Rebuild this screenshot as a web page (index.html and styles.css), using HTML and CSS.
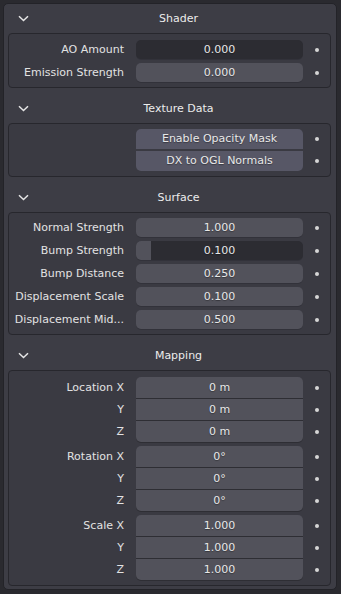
FILE: index.html
```html
<!DOCTYPE html>
<html lang="en">
<head>
    <meta charset="UTF-8">
    <meta name="viewport" content="width=device-width, initial-scale=1.0">
    <title>Material Properties</title>
    <link rel="stylesheet" href="styles.css">
</head>
<body>

    <div class="panel">

        <!-- Shader -->
        <div class="header">
            <span class="chev"><svg width="11" height="7" viewBox="0 0 11 7"><path d="M1 1.2 L5.5 5.5 L10 1.2" fill="none" stroke="#e6e6e6" stroke-width="1.5"/></svg></span>
            <span class="title">Shader</span>
        </div>
        <div class="box">
            <div class="prop">
                <span class="label">AO Amount</span>
                <div class="field slider"><span class="fill" style="width:0%"></span><span class="value">0.000</span></div>
                <span class="dot"></span>
            </div>
            <div class="prop">
                <span class="label">Emission Strength</span>
                <div class="field"><span class="value">0.000</span></div>
                <span class="dot"></span>
            </div>
        </div>

        <!-- Texture Data -->
        <div class="header">
            <span class="chev"><svg width="11" height="7" viewBox="0 0 11 7"><path d="M1 1.2 L5.5 5.5 L10 1.2" fill="none" stroke="#e6e6e6" stroke-width="1.5"/></svg></span>
            <span class="title">Texture Data</span>
        </div>
        <div class="box tight">
            <div class="prop toggle">
                <span class="label"></span>
                <div class="button first">Enable Opacity Mask</div>
                <span class="dot"></span>
            </div>
            <div class="prop toggle">
                <span class="label"></span>
                <div class="button last">DX to OGL Normals</div>
                <span class="dot"></span>
            </div>
        </div>

        <!-- Surface -->
        <div class="header">
            <span class="chev"><svg width="11" height="7" viewBox="0 0 11 7"><path d="M1 1.2 L5.5 5.5 L10 1.2" fill="none" stroke="#e6e6e6" stroke-width="1.5"/></svg></span>
            <span class="title">Surface</span>
        </div>
        <div class="box tight">
            <div class="prop">
                <span class="label">Normal Strength</span>
                <div class="field"><span class="value">1.000</span></div>
                <span class="dot"></span>
            </div>
            <div class="prop">
                <span class="label">Bump Strength</span>
                <div class="field slider"><span class="fill" style="width:9%"></span><span class="value">0.100</span></div>
                <span class="dot"></span>
            </div>
            <div class="prop">
                <span class="label">Bump Distance</span>
                <div class="field"><span class="value">0.250</span></div>
                <span class="dot"></span>
            </div>
            <div class="prop">
                <span class="label">Displacement Scale</span>
                <div class="field"><span class="value">0.100</span></div>
                <span class="dot"></span>
            </div>
            <div class="prop">
                <span class="label">Displacement Mid...</span>
                <div class="field"><span class="value">0.500</span></div>
                <span class="dot"></span>
            </div>
        </div>

        <!-- Mapping -->
        <div class="header">
            <span class="chev"><svg width="11" height="7" viewBox="0 0 11 7"><path d="M1 1.2 L5.5 5.5 L10 1.2" fill="none" stroke="#e6e6e6" stroke-width="1.5"/></svg></span>
            <span class="title">Mapping</span>
        </div>
        <div class="box">
            <div class="group">
                <div class="prop joined">
                    <span class="label">Location X</span>
                    <div class="field first"><span class="value">0 m</span></div>
                    <span class="dot"></span>
                </div>
                <div class="prop joined">
                    <span class="label">Y</span>
                    <div class="field mid"><span class="value">0 m</span></div>
                    <span class="dot"></span>
                </div>
                <div class="prop joined">
                    <span class="label">Z</span>
                    <div class="field last"><span class="value">0 m</span></div>
                    <span class="dot"></span>
                </div>
            </div>
            <div class="group">
                <div class="prop joined">
                    <span class="label">Rotation X</span>
                    <div class="field first"><span class="value">0°</span></div>
                    <span class="dot"></span>
                </div>
                <div class="prop joined">
                    <span class="label">Y</span>
                    <div class="field mid"><span class="value">0°</span></div>
                    <span class="dot"></span>
                </div>
                <div class="prop joined">
                    <span class="label">Z</span>
                    <div class="field last"><span class="value">0°</span></div>
                    <span class="dot"></span>
                </div>
            </div>
            <div class="group">
                <div class="prop joined">
                    <span class="label">Scale X</span>
                    <div class="field first"><span class="value">1.000</span></div>
                    <span class="dot"></span>
                </div>
                <div class="prop joined">
                    <span class="label">Y</span>
                    <div class="field mid"><span class="value">1.000</span></div>
                    <span class="dot"></span>
                </div>
                <div class="prop joined">
                    <span class="label">Z</span>
                    <div class="field last"><span class="value">1.000</span></div>
                    <span class="dot"></span>
                </div>
            </div>
        </div>

    </div>

</body>
</html>
```

FILE: styles.css
```css
/* Pannello proprietà materiale */
body {
    margin: 0;
    background-color: #2a2a2f;
    font-family: "DejaVu Sans", sans-serif;
    font-size: 11px;
    color: #e4e4e4;
}

.panel {
    margin: 3px 4px 0 3px;
    padding: 0 5px 3px 4px;
    border: 1px solid #232328;
    border-radius: 5px;
    background-color: #3d3d45;
}

.header {
    display: flex;
    align-items: center;
    height: 29px;
    padding-right: 4px;
}
.chev {
    width: 22px;
    display: flex;
    align-items: center;
}
.chev svg {
    display: block;
    margin-left: 10px;
}
.title {
    flex: 1;
    text-align: center;
    color: #ececec;
}

.box {
    border: 1px solid #27272d;
    border-radius: 4px;
    background-color: #3a3a42;
    padding: 6px 0 5px;
    margin-bottom: 6px;
    display: flex;
    flex-direction: column;
    gap: 4px;
}
.box:last-child {
    margin-bottom: 0;
}
.box.tight {
    padding-top: 5px;
}

.prop {
    display: grid;
    grid-template-columns: 127px 1fr 27px;
    align-items: center;
    height: 19px;
}
.prop.toggle {
    height: 20px;
}
.prop.joined {
    height: 21px;
}

.label {
    text-align: right;
    padding-right: 12px;
    white-space: nowrap;
    color: #e2e2e2;
}

.field {
    position: relative;
    height: 100%;
    border-radius: 5px;
    background-color: #52525b;
    overflow: hidden;
    text-align: center;
    box-shadow: 0 1px 0 rgba(0, 0, 0, 0.12);
}
.field.slider {
    background-color: #2c2c32;
}
.fill {
    position: absolute;
    left: 0;
    top: 0;
    bottom: 0;
    background-color: #52525b;
}
.value {
    position: relative;
    display: block;
    height: 100%;
    line-height: 19px;
    color: #e8e8e8;
    text-shadow: 0 1px 1px rgba(0, 0, 0, 0.35);
}
.joined .value {
    line-height: 21px;
}

.group {
    display: flex;
    flex-direction: column;
    gap: 1px;
}
.field.first {
    border-radius: 5px 5px 0 0;
}
.field.mid {
    border-radius: 0;
}
.field.last {
    border-radius: 0 0 5px 5px;
}
.joined .field {
    box-shadow: 0 1px 0 #2e2e34;
}

.button {
    height: 100%;
    line-height: 20px;
    text-align: center;
    background-color: #575766;
    color: #e8e8e8;
    text-shadow: 0 1px 1px rgba(0, 0, 0, 0.35);
}
.box.tight .prop.toggle + .prop.toggle {
    margin-top: -2px;
}
.button.first {
    border-radius: 5px 5px 0 0;
}
.button.last {
    border-radius: 0 0 5px 5px;
}

.dot {
    justify-self: center;
    width: 4px;
    height: 4px;
    border-radius: 50%;
    background-color: #d6d6d6;
}
```
